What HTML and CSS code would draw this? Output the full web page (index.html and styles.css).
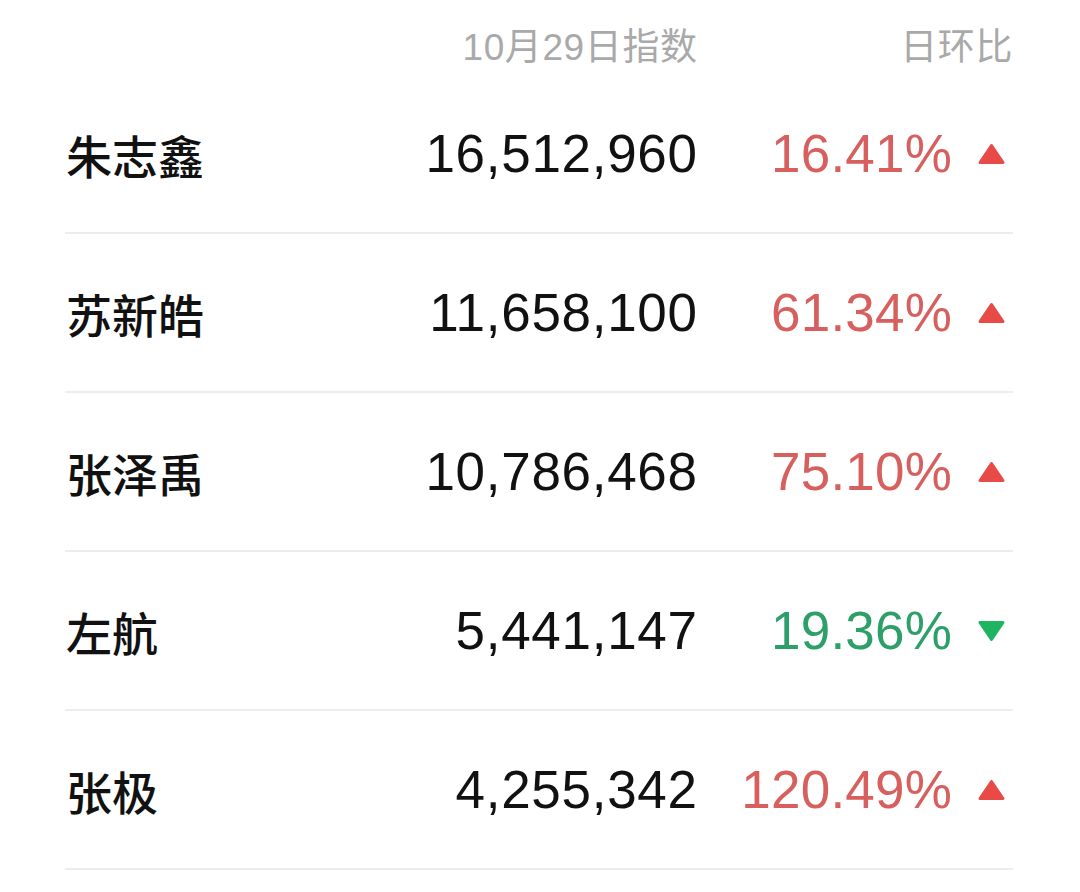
FILE: index.html
```html
<!DOCTYPE html>
<html lang="zh">
<head>
<meta charset="utf-8">
<link rel="stylesheet" href="styles.css">
</head>
<body>
<div class="table">
  <div class="head">
    <div></div>
    <div class="h-num">10月29日指数</div>
    <div class="h-chg">日环比</div>
  </div>
  <div class="row">
    <div class="name">朱志鑫</div>
    <div class="num">16,512,960</div>
    <div class="pct up">16.41%</div>
    <div class="tri"><svg width="27" height="22" viewBox="0 0 27 22"><polygon points="13.5,2.5 25,19.5 2,19.5" class="t-up"/></svg></div>
  </div>
  <div class="row">
    <div class="name">苏新皓</div>
    <div class="num">11,658,100</div>
    <div class="pct up">61.34%</div>
    <div class="tri"><svg width="27" height="22" viewBox="0 0 27 22"><polygon points="13.5,2.5 25,19.5 2,19.5" class="t-up"/></svg></div>
  </div>
  <div class="row">
    <div class="name">张泽禹</div>
    <div class="num">10,786,468</div>
    <div class="pct up">75.10%</div>
    <div class="tri"><svg width="27" height="22" viewBox="0 0 27 22"><polygon points="13.5,2.5 25,19.5 2,19.5" class="t-up"/></svg></div>
  </div>
  <div class="row">
    <div class="name">左航</div>
    <div class="num">5,441,147</div>
    <div class="pct down">19.36%</div>
    <div class="tri"><svg width="27" height="22" viewBox="0 0 27 22"><polygon points="2,2.5 25,2.5 13.5,19.5" class="t-down"/></svg></div>
  </div>
  <div class="row">
    <div class="name">张极</div>
    <div class="num">4,255,342</div>
    <div class="pct up">120.49%</div>
    <div class="tri"><svg width="27" height="22" viewBox="0 0 27 22"><polygon points="13.5,2.5 25,19.5 2,19.5" class="t-up"/></svg></div>
  </div>
</div>
</body>
</html>
```

FILE: styles.css
```css
html, body {
  margin: 0;
  padding: 0;
  background: #ffffff;
}

body {
  width: 1080px;
  height: 892px;
  overflow: hidden;
  font-family: "Liberation Sans", "Noto Sans CJK SC", sans-serif;
}

.table {
  margin-left: 65px;
  width: 948px;
}

.head,
.row {
  display: grid;
  grid-template-columns: 1fr auto 255px 61px;
  align-items: center;
}

.head {
  grid-template-columns: 1fr auto 316px;
  height: 75px;
  align-items: start;
  color: #a9a9a9;
  font-size: 37px;
}

.h-num,
.h-chg {
  text-align: right;
  padding-top: 26px;
  line-height: 44px;
  letter-spacing: 0.6px;
}

.h-num {
  margin-right: -0.6px;
}

.h-chg {
  margin-right: 0;
}

.row {
  height: 157px;
  border-bottom: 2px solid #ededed;
}

.name {
  font-family: "Noto Sans CJK SC", sans-serif;
  font-weight: 500;
  font-size: 46px;
  color: #111111;
  padding-left: 1px;
  line-height: 50px;
}

.num {
  font-size: 53px;
  color: #111111;
  text-align: right;
  line-height: 60px;
  letter-spacing: 0.7px;
  margin-right: -0.7px;
}

.pct {
  font-size: 53px;
  text-align: right;
  line-height: 60px;
  letter-spacing: 0.2px;
}

.pct.up {
  color: #d7605e;
}

.pct.down {
  color: #2d9f68;
}

.tri {
  padding-left: 26px;
  display: flex;
  align-items: center;
}

.tri svg {
  display: block;
}

.t-up {
  fill: #e84b47;
  stroke: #e84b47;
  stroke-width: 3;
  stroke-linejoin: round;
}

.t-down {
  fill: #1fb462;
  stroke: #1fb462;
  stroke-width: 3;
  stroke-linejoin: round;
}
```
